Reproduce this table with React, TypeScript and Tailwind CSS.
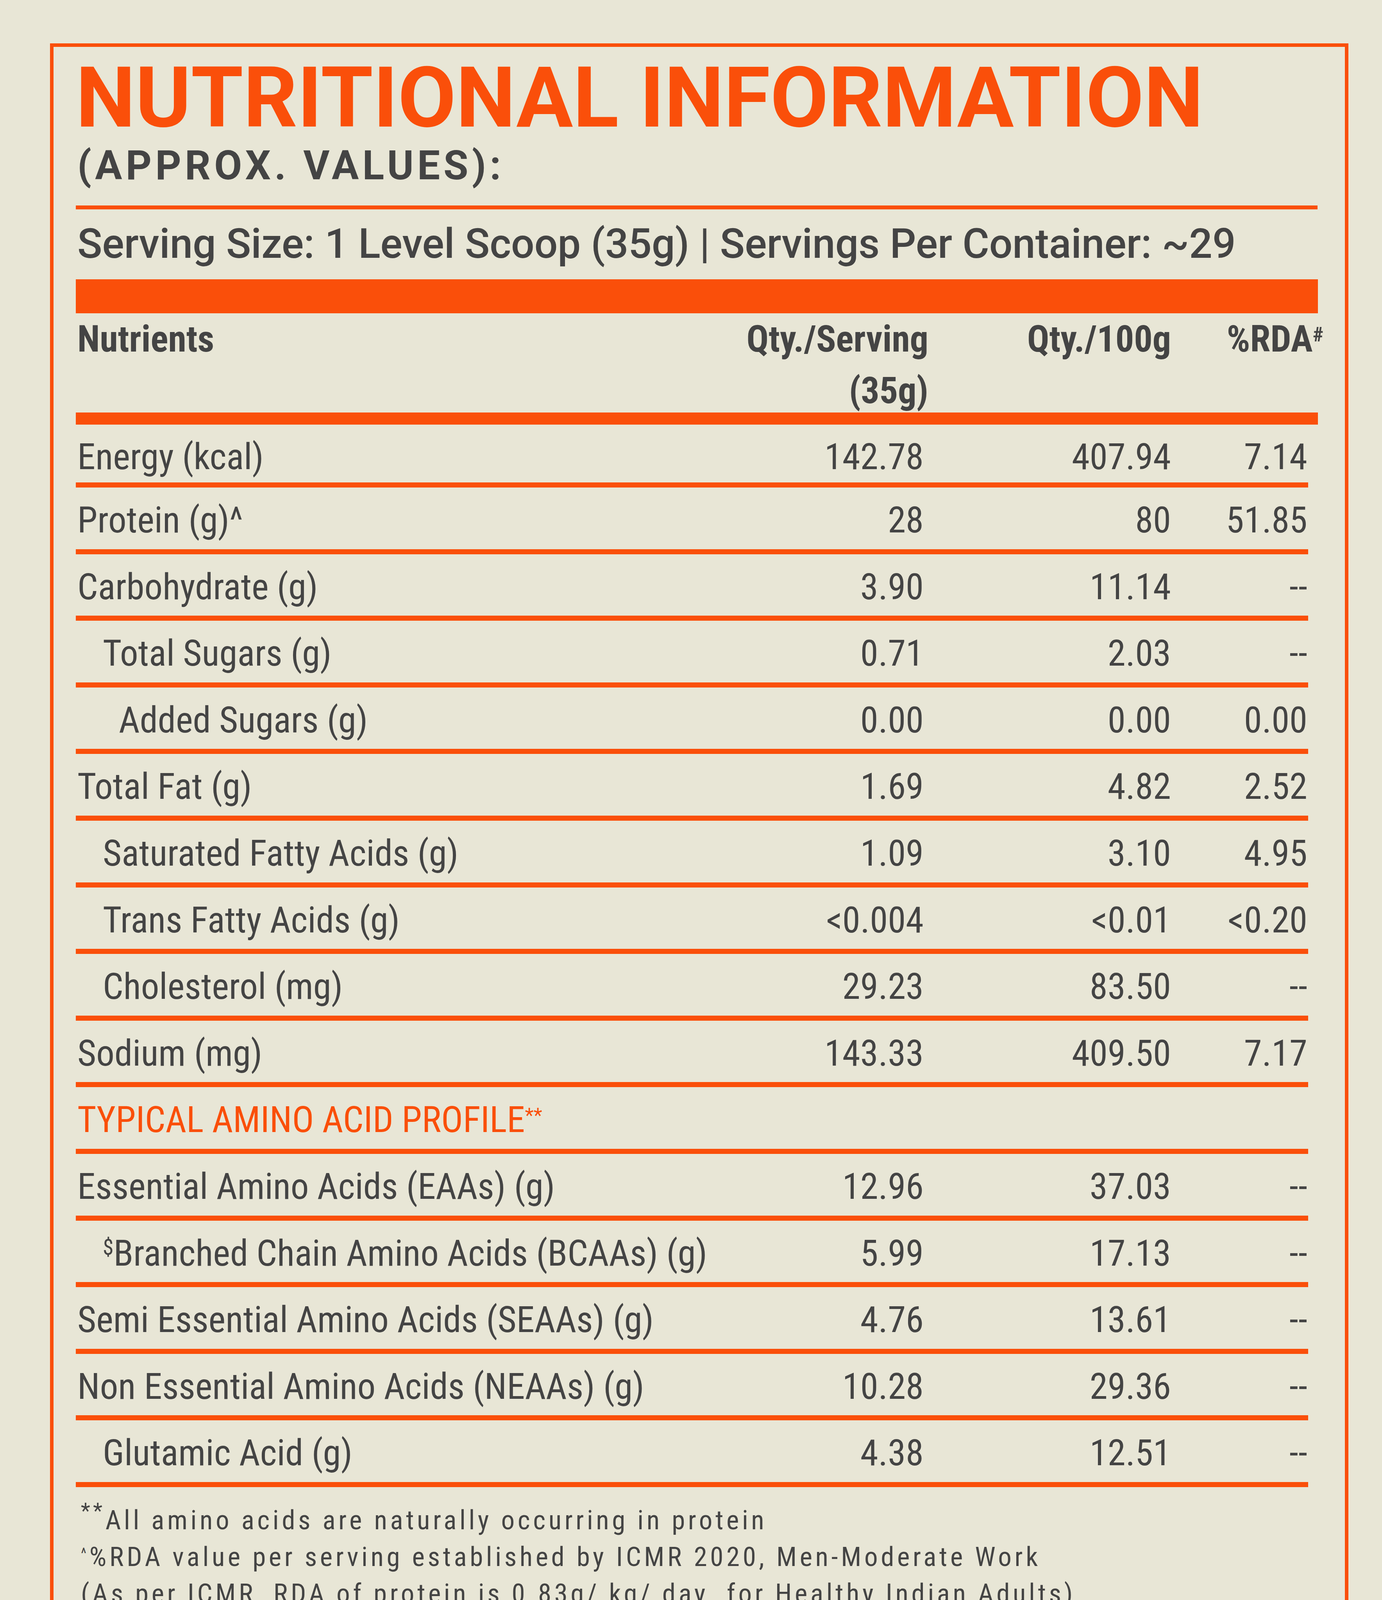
import type { ReactNode } from "react";

type Row = { name: ReactNode; a: string; b: string; c: string; indent?: 0 | 1 | 2 };

const ROWS: Row[] = [
  { name: "Energy (kcal)", a: "142.78", b: "407.94", c: "7.14" },
  { name: "Protein (g)^", a: "28", b: "80", c: "51.85" },
  { name: "Carbohydrate (g)", a: "3.90", b: "11.14", c: "--" },
  { name: "Total Sugars (g)", a: "0.71", b: "2.03", c: "--", indent: 1 },
  { name: "Added Sugars (g)", a: "0.00", b: "0.00", c: "0.00", indent: 2 },
  { name: "Total Fat (g)", a: "1.69", b: "4.82", c: "2.52" },
  { name: "Saturated Fatty Acids (g)", a: "1.09", b: "3.10", c: "4.95", indent: 1 },
  { name: "Trans Fatty Acids (g)", a: "<0.004", b: "<0.01", c: "<0.20", indent: 1 },
  { name: "Cholesterol (mg)", a: "29.23", b: "83.50", c: "--", indent: 1 },
  { name: "Sodium (mg)", a: "143.33", b: "409.50", c: "7.17" },
];

const AMINO_ROWS: Row[] = [
  { name: "Essential Amino Acids (EAAs) (g)", a: "12.96", b: "37.03", c: "--" },
  {
    name: (
      <>
        <sup className="text-[60%]">$</sup>Branched Chain Amino Acids (BCAAs) (g)
      </>
    ),
    a: "5.99",
    b: "17.13",
    c: "--",
    indent: 1,
  },
  { name: "Semi Essential Amino Acids (SEAAs) (g)", a: "4.76", b: "13.61", c: "--" },
  { name: "Non Essential Amino Acids (NEAAs) (g)", a: "10.28", b: "29.36", c: "--" },
  { name: "Glutamic Acid (g)", a: "4.38", b: "12.51", c: "--", indent: 1 },
];

const INDENT = ["pl-[4px]", "pl-[69px]", "pl-[110px]"];

const EAAS: ReactNode[] = [
  <>Isoleucine<sup className="text-[62%]">$</sup></>,
  <>Leucine<sup className="text-[62%]">$</sup></>,
  <>Valine<sup className="text-[62%]">$</sup></>,
  "Lysine",
  "Methionine",
  "Phenylalanine",
  "Threonine",
  "Tryptophan",
  "Histidine",
];
const SEAAS = ["Arginine", "Cysteine", "Glycine", "Proline", "Tyrosine"];
const NEAAS = ["Serine", "Alanine", "Aspartic Acid", "Glutamic Acid"];

const COND = "font-['Roboto_Condensed',Roboto,sans-serif]";

function TableRow({ row, first }: { row: Row; first?: boolean }) {
  return (
    <div className="border-b-[13px] border-[#fa4f0a]">
      <div
        className={`flex ${first ? "h-[148px] pt-[28px]" : "h-[157.6px] pt-[29px]"} text-[93px] leading-[109px] text-[#444444]`}
      >
        <div className={`flex-1 whitespace-nowrap ${INDENT[row.indent ?? 0]}`}>{row.name}</div>
        <div className="w-[500px] text-right">{row.a}</div>
        <div className="w-[633px] text-right">{row.b}</div>
        <div className="w-[351px] pr-[2px] text-right">{row.c}</div>
      </div>
    </div>
  );
}

function Tag({ label, right }: { label: string; right?: boolean }) {
  return (
    <div
      className={`h-[98px] w-[308px] bg-[#fa4f0a] pt-[5px] pl-[31px] text-[90px] leading-[93px] font-bold text-white [clip-path:polygon(38px_0,100%_0,100%_100%,0_100%,0_27px)] ${right ? "self-end" : ""}`}
    >
      {label}
    </div>
  );
}

function AminoList({ items, right }: { items: ReactNode[]; right?: boolean }) {
  return (
    <div className="mt-[33px] flex flex-col">
      {items.map((item, i) => (
        <div
          key={i}
          className={`flex h-[140px] pt-[13px] text-[92px] leading-[108px] tracking-[0.055em] text-[#444444] whitespace-nowrap ${right ? "justify-end" : ""} ${i < items.length - 1 ? "border-b-[5px] border-[#fa4f0a]" : ""}`}
        >
          <span className={right ? "-mr-[5px]" : ""}>{item}</span>
        </div>
      ))}
    </div>
  );
}

function Ribbon({ right }: { right?: boolean }) {
  return (
    <svg
      viewBox="0 0 496 55"
      className={`h-[55px] w-[496px] shrink-0 ${right ? "self-end" : "self-start"}`}
    >
      <polygon points="0,7 61,0 496,0 463,55 445,26 61,26" fill="#fa4f0a" />
    </svg>
  );
}

function Total({ value, right }: { value: string; right?: boolean }) {
  return (
    <div className="flex w-[484px] flex-col">
      <Ribbon right={right} />
      <div className="mt-[6px] text-center font-['Roboto',sans-serif] text-[94px] leading-[94px] font-bold tracking-[0.04em] text-[#58595b]">
        {value}
        <sup className="text-[55%] font-normal">*</sup>
      </div>
    </div>
  );
}

export default function App() {
  return (
    <div className={`min-h-[7041px] w-[3537px] bg-[#e8e6d6] pt-[111px] ${COND}`}>
      {/* Nutrition table */}
      <section className="ml-[128px] w-[3323px] border-[9px] border-[#fa4f0a] pt-[23px] pb-[16px] pl-[57px]">
        <h1 className="font-['Roboto',sans-serif] text-[216px] leading-[216px] font-bold text-[#fa4f0a]">
          NUTRITIONAL INFORMATION
        </h1>
        <h2 className="mt-[13px] pl-[4px] font-['Roboto',sans-serif] text-[103px] leading-[103px] font-bold tracking-[0.09em] text-[#444444]">
          (APPROX. VALUES):
        </h2>
        <div className="mt-[51px] h-[10px] w-[3178px] bg-[#fa4f0a]" />
        <p className="mt-[36px] pl-[4px] font-['Roboto',sans-serif] text-[105px] leading-[105px] font-medium text-[#444444]">
          Serving Size: 1 Level Scoop (35g) | Servings Per Container: ~29
        </p>
        <div className="mt-[38px] h-[87px] w-[3179px] bg-[#fa4f0a]" />
        <div className="flex h-[254px] w-[3179px] text-[94px] leading-[132px] font-bold text-[#444444]">
          <div className="flex-1 pl-[4px]">Nutrients</div>
          <div className="w-[520px] text-right">
            Qty./Serving
            <br />
            (35g)
          </div>
          <div className="w-[621px] text-right">Qty./100g</div>
          <div className="-mr-[14px] w-[390px] text-right">
            %RDA<sup className="text-[55%]">#</sup>
          </div>
        </div>
        <div className="h-[31px] w-[3179px] bg-[#fa4f0a]" />
        <div className="w-[3154px]">
          {ROWS.map((r, i) => (
            <TableRow key={i} row={r} first={i === 0} />
          ))}
          <div className="border-b-[13px] border-[#fa4f0a]">
            <div className="h-[157.6px] pt-[29px] pl-[4px] text-[93px] leading-[109px] text-[#fa4f0a]">
              TYPICAL AMINO ACID PROFILE<sup className="text-[55%]">**</sup>
            </div>
          </div>
          {AMINO_ROWS.map((r, i) => (
            <TableRow key={i} row={r} />
          ))}
        </div>
        <div className="mt-[38px] pl-[13px] text-[69px] leading-[94px] tracking-[0.11em] text-[#444444]">
          <p>
            <sup className="text-[80%]">**</sup>All amino acids are naturally occurring in protein
          </p>
          <p>
            <sup className="text-[55%]">^</sup>%RDA value per serving established by ICMR 2020, Men-Moderate Work
          </p>
          <p>(As per ICMR, RDA of protein is 0.83g/ kg/ day{"\u00a0"} for Healthy Indian Adults)</p>
          <p>
            <sup className="text-[55%]">#</sup>%RDA values per serving based on 2000 kcal diet for average adult
          </p>
          <p>--%RDA values not established</p>
          <p>‘CONTAINS NATURALLY OCCURRING SUGARS’</p>
        </div>
      </section>

      {/* Amino acid profile */}
      <section className="mt-[86px] ml-[133px] w-[3318px]">
        <div className="border-x-[9px] border-t-[9px] border-[#fa4f0a] pt-[25px] pr-[97px] pb-[17px] pl-[116px]">
          <h3 className="-ml-[26px] text-[102px] leading-[102px] font-bold tracking-[0.04em] text-[#fa4f0a]">
            TYPICAL AMINO ACID PROFILE<sup className="text-[55%]">**</sup>
          </h3>
          <div className="mt-[41px] flex">
            <div className="flex w-[484px] flex-col">
              <Tag label="EAAs" />
              <AminoList items={EAAS} />
            </div>
            <div className="ml-[905px] flex w-[484px] flex-col">
              <Tag label="SEAAs" />
              <AminoList items={SEAAS} />
            </div>
            <div className="ml-auto flex w-[484px] flex-col">
              <Tag label="NEAAs" right />
              <AminoList items={NEAAS} right />
            </div>
          </div>
          <div className="mt-[19px] flex">
            <Total value="~12.96 g" />
            <div className="ml-[905px]">
              <Total value="~4.76 g" />
            </div>
            <div className="ml-auto">
              <Total value="~10.28 g" right />
            </div>
          </div>
        </div>
        <div className="h-[101px] bg-[#fa4f0a] pt-[8px] pl-[58px] font-['Roboto',sans-serif] text-[76px] leading-[76px] text-white">
          *Values per serving
        </div>
      </section>

      {/* Ingredients */}
      <div className="mt-[50px] ml-[140px] w-[3278px] font-['Roboto',sans-serif] text-[112px] leading-[128px] text-[#444444]">
        <p className="text-justify [text-align-last:justify]">
          <span className="font-bold text-[#fa4f0a]">INGREDIENTS:</span> Whey Protein Isolate, Yeast Protein
          Isolate, Cocoa
        </p>
        <p className="text-justify [text-align-last:justify]">
          Powder, Nature-Identical Flavouring Substances, Salt, Lecithin
        </p>
        <p className="text-justify [text-align-last:justify]">
          (Emulsifier), Xanthan Gum (Stabilizer), Sucralose (Sweetener)
        </p>
        <p>and Silicon Dioxide (Anticaking agent).</p>
      </div>
    </div>
  );
}
